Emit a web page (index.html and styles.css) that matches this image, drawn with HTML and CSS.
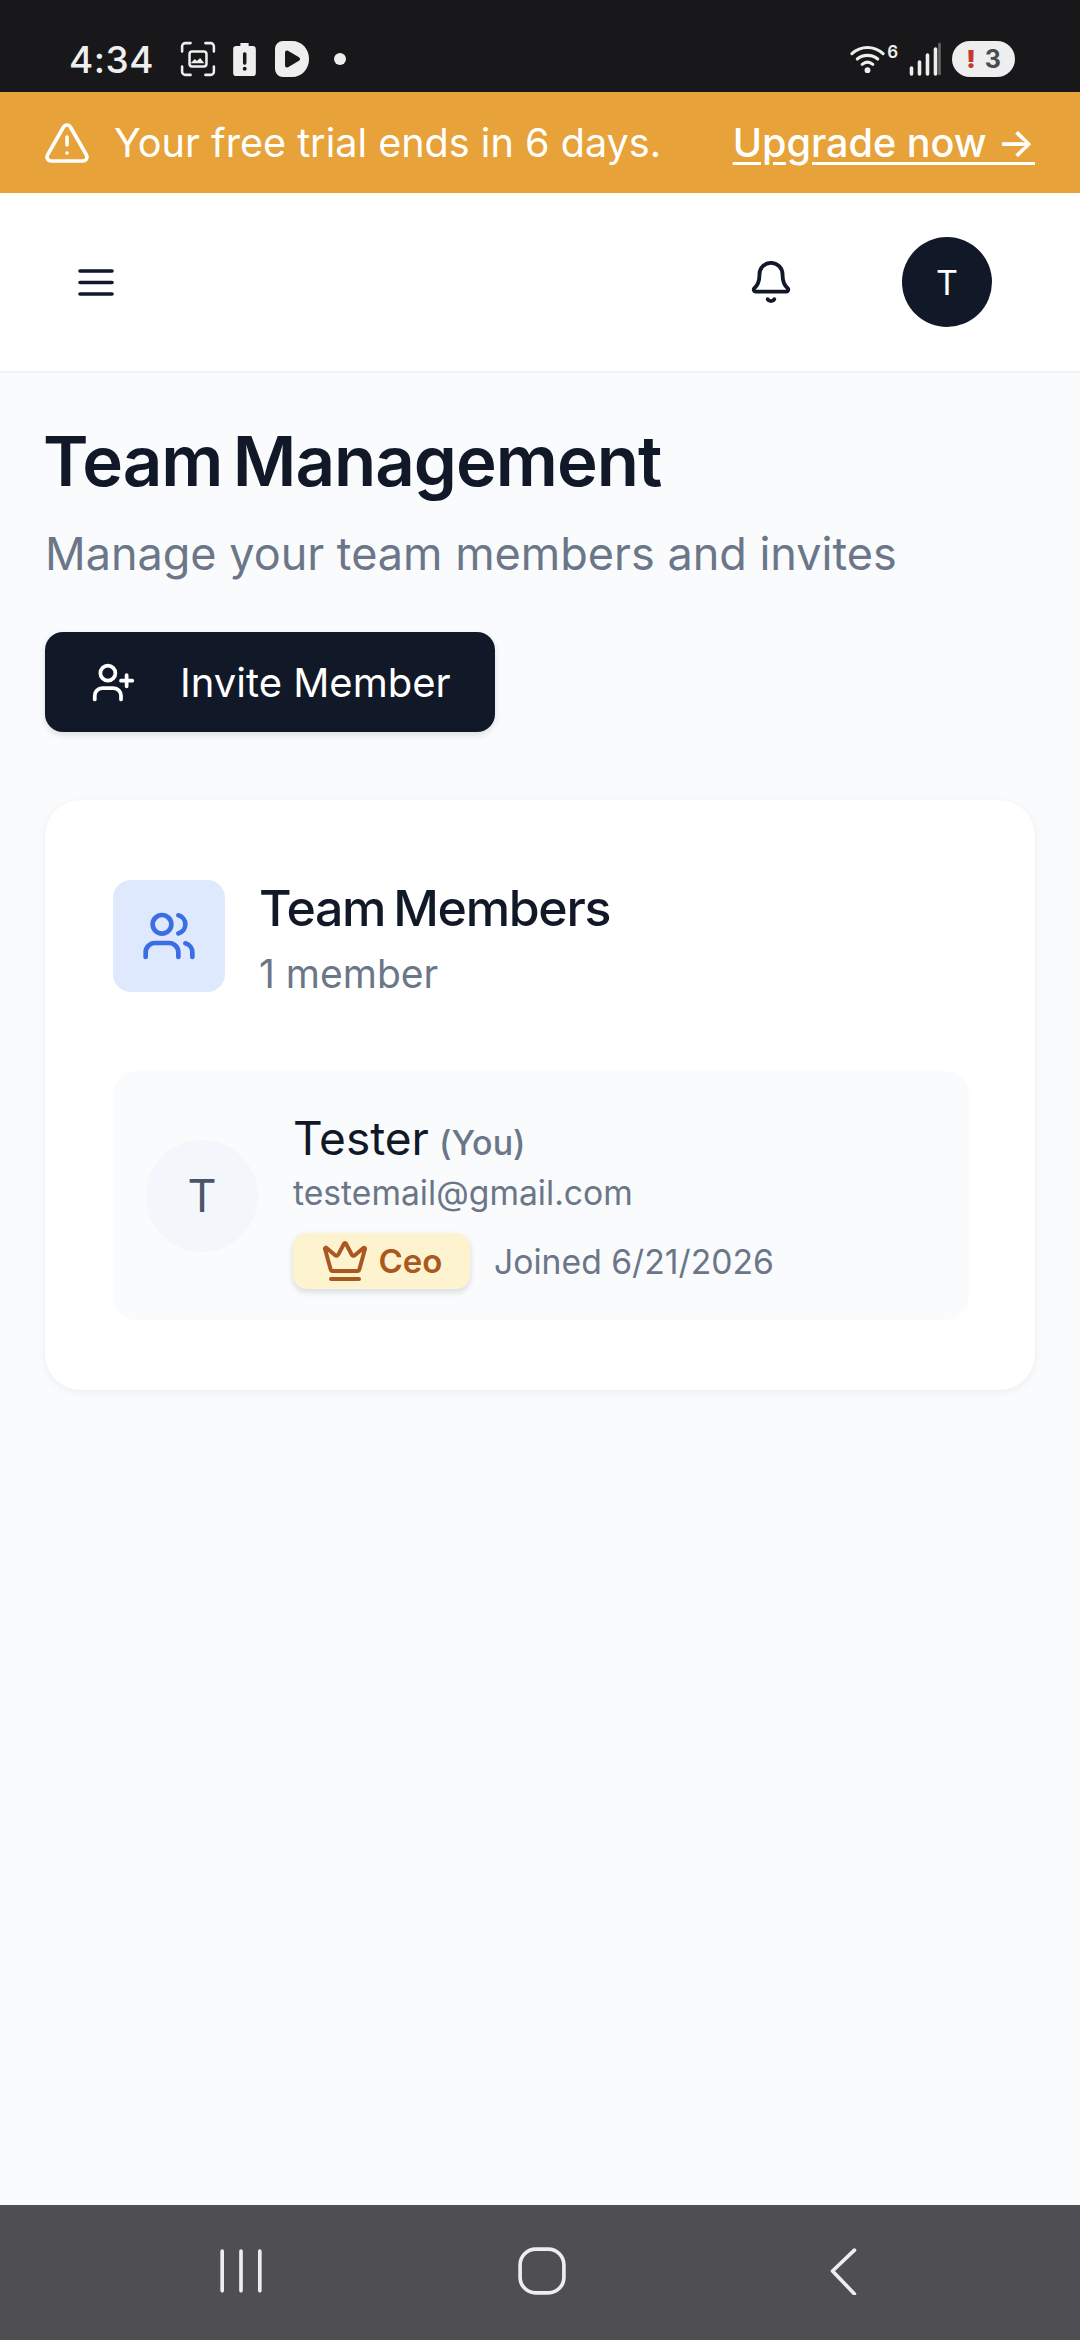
FILE: index.html
```html
<!DOCTYPE html>
<html lang="en">
<head>
  <meta charset="UTF-8" />
  <meta name="viewport" content="width=device-width, initial-scale=1.0"/>
  <title>Team Management</title>
  <link rel="stylesheet" href="styles.css">
</head>
<body>
  <div class="status-bar">
    <div class="status-left">
      <span class="clock">4:34</span>
      <svg class="st-shot" viewBox="0 0 34 34" fill="none" stroke="#eee" stroke-width="2.4" stroke-linecap="round">
        <path d="M2 10V5a3 3 0 0 1 3-3h5M24 2h5a3 3 0 0 1 3 3v5M32 24v5a3 3 0 0 1-3 3h-5M10 32H5a3 3 0 0 1-3-3v-5"/>
        <rect x="9" y="10" width="16" height="14" rx="2.5"/>
        <path d="M10 21l4-4 2 2 3-3 4 5z" fill="#eee" stroke="none"/>
      </svg>
      <svg class="st-batt" viewBox="0 0 22 32">
        <path d="M7 0h8v3h4a3 3 0 0 1 3 3v23a3 3 0 0 1-3 3H3a3 3 0 0 1-3-3V6a3 3 0 0 1 3-3h4z" fill="#eee"/>
        <rect x="9.5" y="9" width="3.4" height="12" rx="1.5" fill="#18181b"/>
        <circle cx="11.2" cy="25" r="1.9" fill="#18181b"/>
      </svg>
      <svg class="st-play" viewBox="0 0 34 36">
        <path d="M0 8a8 8 0 0 1 8-8h9c10 0 17 8 17 18s-7 18-17 18H8a8 8 0 0 1-8-8z" fill="#eee"/>
        <path d="M10 11.5c0-1.6 1.6-2.500 3-1.700l11 6.500c1.300.8 1.300 2.600 0 3.400l-11 6.500c-1.400.8-3-.1-3-1.700z" fill="#18181b"/>
      </svg>
      <span class="st-dot"></span>
    </div>
    <div class="status-right">
      <svg class="st-wifi" viewBox="0 0 36 30" fill="none" stroke="#eee" stroke-width="3.2" stroke-linecap="round">
        <path d="M2 9.500C11 1 25 1 34 9.500"/>
        <path d="M7.500 15c6-5 15-5 21 0"/>
        <path d="M12.500 20.500c3.500-2.800 7.500-2.800 11 0"/>
        <circle cx="18" cy="26.500" r="3" fill="#eee" stroke="none"/>
      </svg>
      <span class="st-six">6</span>
      <svg class="st-signal" viewBox="0 0 32 34" stroke-width="3.600" stroke-linecap="round">
        <path d="M3 32v-6M11 32V20M19 32V13M27 32V7" stroke="#eee"/>
        <path d="M31 32V2" stroke="#666" stroke-width="2.600"/>
      </svg>
      <span class="st-pill"><b class="st-warn">!</b>3</span>
    </div>
  </div>

  <div class="trial-banner">
    <div class="trial-msg">
      <svg class="trial-icon" viewBox="0 0 24 24" fill="none" stroke="#fff" stroke-width="1.800" stroke-linecap="round" stroke-linejoin="round">
        <path d="M21.730 18l-8-14a2 2 0 0 0-3.480 0l-8 14A2 2 0 0 0 4 21h16a2 2 0 0 0 1.730-3"/>
        <path d="M12 9v4M12 17h.01"/>
      </svg>
      <span>Your free trial ends in 6 days.</span>
    </div>
    <a class="trial-link">Upgrade now →</a>
  </div>

  <header class="topbar">
    <svg class="menu-icon" viewBox="0 0 36 36" fill="none" stroke="#111827" stroke-width="3.600" stroke-linecap="round">
      <path d="M2 7h32M2 18.500h32M2 30h32"/>
    </svg>
    <div class="topbar-right">
      <svg class="bell-icon" viewBox="0 0 24 24" fill="none" stroke="#111827" stroke-width="2" stroke-linecap="round" stroke-linejoin="round">
        <path d="M10.270 21a2 2 0 0 0 3.460 0"/>
        <path d="M3.260 15.330A1 1 0 0 0 4 17h16a1 1 0 0 0 .74-1.670C19.410 13.960 18 12.500 18 8A6 6 0 0 0 6 8c0 4.500-1.410 5.960-2.740 7.330"/>
      </svg>
      <div class="avatar">T</div>
    </div>
  </header>

  <main class="content">
    <h1>Team Management</h1>
    <p class="subtitle">Manage your team members and invites</p>
    <button class="invite-btn">
      <svg viewBox="0 0 24 24" fill="none" stroke="#fff" stroke-width="2" stroke-linecap="round" stroke-linejoin="round">
        <path d="M16 21v-2a4 4 0 0 0-4-4H6a4 4 0 0 0-4 4v2"/>
        <circle cx="9" cy="7" r="4"/>
        <path d="M19 8v6M22 11h-6"/>
      </svg>
      Invite Member
    </button>

    <section class="card">
      <div class="card-head">
        <div class="card-icon">
          <svg viewBox="0 0 24 24" fill="none" stroke="#3b6ee6" stroke-width="2" stroke-linecap="round" stroke-linejoin="round">
            <path d="M16 21v-2a4 4 0 0 0-4-4H6a4 4 0 0 0-4 4v2"/>
            <circle cx="9" cy="7" r="4"/>
            <path d="M22 21v-2a4 4 0 0 0-3-3.870"/>
            <path d="M16 3.130a4 4 0 0 1 0 7.750"/>
          </svg>
        </div>
        <div>
          <h2>Team Members</h2>
          <p class="count">1 member</p>
        </div>
      </div>

      <div class="member">
        <div class="member-avatar">T</div>
        <div class="member-info">
          <div class="member-name">Tester <span class="you">(You)</span></div>
          <div class="member-email">testemail@gmail.com</div>
          <div class="member-meta">
            <span class="role-badge">
              <svg viewBox="0 0 24 24" fill="none" stroke="#a9581f" stroke-width="2" stroke-linecap="round" stroke-linejoin="round">
                <path d="M11.560 3.270a.5.5 0 0 1 .88 0l2.950 5.610a1 1 0 0 0 1.520.290l4.280-3.660a.5.5 0 0 1 .8.520l-2.830 10.240a1 1 0 0 1-.96.730H5.800a1 1 0 0 1-.96-.730L2.010 5.980a.5.5 0 0 1 .8-.520l4.280 3.660a1 1 0 0 0 1.520-.290z"/>
                <path d="M5 21h14"/>
              </svg>
              Ceo
            </span>
            <span class="joined">Joined 6/21/2026</span>
          </div>
        </div>
      </div>
    </section>
  </main>

  <nav class="nav-bar">
    <svg class="nav-recent" viewBox="0 0 44 44" fill="none" stroke="#eee" stroke-width="3.500" stroke-linecap="round">
      <path d="M4 3v38M22 3v38M40 3v38"/>
    </svg>
    <svg class="nav-home" viewBox="0 0 46 46" fill="none" stroke="#eee" stroke-width="3.500">
      <rect x="2" y="2" width="42" height="42" rx="15"/>
    </svg>
    <svg class="nav-back" viewBox="0 0 30 46" fill="none" stroke="#eee" stroke-width="3.500" stroke-linecap="round" stroke-linejoin="round">
      <path d="M25 3L4 23l21 22" />
    </svg>
  </nav>
</body>
</html>
```

FILE: styles.css
```css
* { box-sizing: border-box; }
html, body { margin: 0; padding: 0; }
body {
  width: 1080px;
  height: 2340px;
  display: flex;
  flex-direction: column;
  font-family: 'Inter', 'Noto Sans', sans-serif;
  background: #f9fbfd;
  color: #111827;
  overflow: hidden;
}
h1, h2, p { margin: 0; }

/* status bar */
.status-bar {
  height: 92px;
  background: #18181b;
  display: flex;
  justify-content: space-between;
  align-items: center;
  padding: 26px 65px 0 69px;
  color: #eee;
}
.status-left, .status-right { display: flex; align-items: center; }
.clock { font-size: 37px; font-weight: 500; width: 111px; letter-spacing: .5px; }
.st-shot { width: 36px; height: 36px; margin-right: 17px; }
.st-batt { width: 23px; height: 33px; margin-right: 19px; }
.st-play { width: 34px; height: 36px; margin-right: 25px; }
.st-dot { width: 12px; height: 12px; border-radius: 50%; background: #eee; }
.st-wifi { width: 35px; height: 30px; }
.st-six { font-size: 17px; font-weight: 600; margin: -14px 10px 0 2px; }
.st-signal { width: 33px; height: 34px; margin-right: 11px; }
.st-pill {
  width: 63px;
  height: 36px;
  border-radius: 18px;
  background: #eee;
  color: #4b4b4f;
  font-size: 25px;
  font-weight: 700;
  display: flex;
  align-items: center;
  justify-content: center;
  gap: 9px;
}
.st-warn { color: #c5392f; }

/* trial banner */
.trial-banner {
  height: 101px;
  background: #e8a23a;
  color: #fff;
  display: flex;
  justify-content: space-between;
  align-items: center;
  padding: 0 45px 0 43px;
  font-size: 39.600px;
}
.trial-msg { display: flex; align-items: center; gap: 23px; }
.trial-icon { width: 48px; height: 48px; }
.trial-link { font-weight: 500; text-decoration: underline; text-underline-offset: 5px; }

/* top bar */
.topbar {
  height: 180px;
  background: #fff;
  border-bottom: 2px solid #f1f3f6;
  display: flex;
  justify-content: space-between;
  align-items: center;
  padding: 0 88px 0 78px;
}
.menu-icon { width: 36px; height: 36px; }
.topbar-right { display: flex; align-items: center; gap: 108px; }
.bell-icon { width: 46px; height: 46px; }
.avatar {
  width: 90px;
  height: 90px;
  border-radius: 50%;
  background: #111827;
  color: #fff;
  font-size: 34px;
  display: flex;
  align-items: center;
  justify-content: center;
}

/* page content */
.content { flex: 1; padding: 52px 45px 0; }
h1 { font-size: 69px; font-weight: 600; line-height: 72px; letter-spacing: -1px; word-spacing: -6px; margin-left: -2px; }
.subtitle { font-size: 45px; line-height: 60px; color: #6b7688; margin-top: 27px; }
.invite-btn {
  margin-top: 48px;
  width: 450px;
  height: 100px;
  border: none;
  border-radius: 18px;
  background: #111827;
  color: #fff;
  font-family: inherit;
  font-size: 40px;
  display: flex;
  align-items: center;
  gap: 44px;
  padding: 0 0 0 46px;
  box-shadow: 0 3px 6px rgba(17,24,39,.12);
}
.invite-btn svg { width: 45px; height: 45px; }

.card {
  margin-top: 68px;
  height: 590px;
  background: #fff;
  border-radius: 36px;
  padding: 80px 66px 0 68px;
  box-shadow: 0 2px 10px rgba(17,24,39,.06);
}
.card-head { display: flex; gap: 34px; }
.card-icon {
  width: 112px;
  height: 112px;
  border-radius: 18px;
  background: #dfe9fd;
  display: flex;
  align-items: center;
  justify-content: center;
}
.card-icon svg { width: 56px; height: 56px; }
h2 { font-size: 50px; font-weight: 500; line-height: 56px; letter-spacing: -1.300px; word-spacing: -4px; }
.count { font-size: 39px; line-height: 50px; color: #6b7688; margin-top: 13px; }

.member {
  margin-top: 72px;
  height: 249px;
  background: #f9fbfd;
  border-radius: 24px;
  padding: 0 33px;
  display: flex;
  align-items: center;
  gap: 35px;
}
.member-avatar {
  width: 112px;
  height: 112px;
  border-radius: 50%;
  background: #f3f6fb;
  color: #4b5567;
  font-size: 45px;
  display: flex;
  align-items: center;
  justify-content: center;
  flex: none;
}
.member-info { margin-top: 9px; }
.member-name { font-size: 46px; line-height: 54px; }
.you { font-size: 34px; font-weight: 500; color: #6b7688; margin-left: -3px; }
.member-email { font-size: 33.700px; line-height: 44px; color: #6b7688; margin-top: 1px; }
.member-meta { display: flex; align-items: center; gap: 24px; margin-top: 18px; }
.role-badge {
  width: 177px;
  height: 56px;
  border-radius: 14px;
  background: #fdf3cf;
  color: #a9581f;
  font-size: 33px;
  font-weight: 600;
  display: flex;
  align-items: center;
  justify-content: center;
  gap: 10px;
  box-shadow: 0 3px 6px rgba(17,24,39,.14);
}
.role-badge svg { width: 48px; height: 48px; }
.joined { font-size: 33.700px; color: #6b7688; }

/* android nav */
.nav-bar {
  height: 135px;
  background: #4e4e53;
  display: flex;
  align-items: center;
  padding: 0 0 3px 218px;
}
.nav-recent { width: 46px; height: 46px; }
.nav-home { width: 48px; height: 48px; margin-left: 254px; }
.nav-back { width: 32px; height: 48px; margin-left: 262px; }
```
